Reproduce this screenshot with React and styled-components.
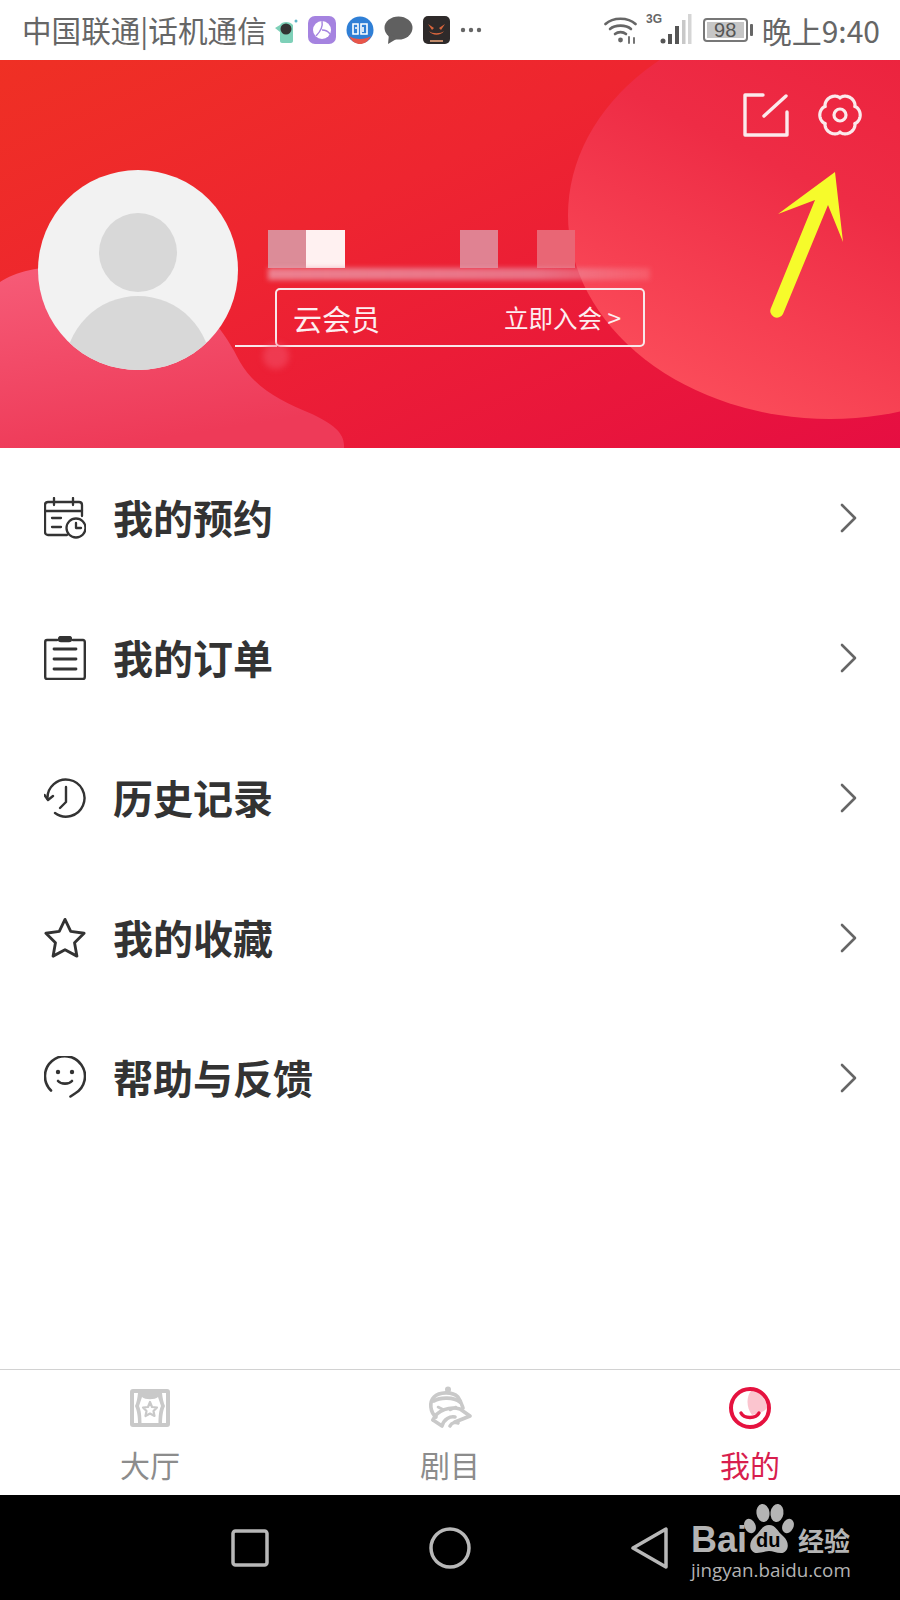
import React from 'react'
import styled, { createGlobalStyle } from 'styled-components'

const CJK = `'Noto Sans CJK SC', 'Noto Sans', sans-serif`

const GlobalStyle = createGlobalStyle`
  html, body {
    margin: 0;
    padding: 0;
    background: #ffffff;
  }
  * {
    box-sizing: border-box;
  }
`

const Page = styled.div`
  width: 900px;
  height: 1600px;
  display: flex;
  flex-direction: column;
  font-family: ${CJK};
  overflow: hidden;
  background: #ffffff;
`

/* status bar */
const StatusBar = styled.div`
  height: 60px;
  flex: none;
  display: flex;
  align-items: center;
  padding: 0 20px 0 22px;
  color: #666666;
  background: #ffffff;
`
const Carrier = styled.div`
  font-size: 29.6px;
  line-height: 60px;
  white-space: nowrap;
`
const NoticeIcons = styled.div`
  display: flex;
  align-items: center;
  gap: 10px;
  margin-left: 7px;
`
const StatusRight = styled.div`
  margin-left: auto;
  display: flex;
  align-items: center;
  gap: 8px;
`
const Clock = styled.div`
  font-size: 30px;
  line-height: 60px;
  margin-left: 6px;
  white-space: nowrap;
`
const Battery = styled.div`
  width: 45px;
  height: 24px;
  border: 2px solid #777777;
  border-radius: 4px;
  margin-left: 3px;
  padding: 2px;
  position: relative;
  &::after {
    content: '';
    position: absolute;
    right: -7px;
    top: 4px;
    width: 3px;
    height: 12px;
    background: #666666;
    border-radius: 1px;
  }
`
const BatteryFill = styled.div`
  height: 100%;
  background: #c6c6c6;
  font-family: 'Liberation Sans', sans-serif;
  font-size: 20px;
  line-height: 16px;
  text-align: center;
  color: #555555;
`

/* red header */
const Header = styled.div`
  height: 388px;
  flex: none;
  position: relative;
  overflow: hidden;
  background: linear-gradient(155deg, #ef3024 0%, #ee2530 38%, #e60e42 100%);
  padding: 33px 38px 0 38px;
`
const Decor = styled.svg`
  position: absolute;
  left: 0;
  top: 0;
`
const HeaderActions = styled.div`
  position: relative;
  display: flex;
  justify-content: flex-end;
  gap: 29px;
  height: 44px;
`
const Profile = styled.div`
  position: relative;
  display: flex;
  margin-top: 33px;
`
const Avatar = styled.div`
  width: 200px;
  height: 200px;
  flex: none;
  border-radius: 50%;
  background: #f2f2f2;
  overflow: hidden;
  display: flex;
  flex-direction: column;
  align-items: center;
  padding-top: 43px;
`
const AvatarHead = styled.div`
  width: 78px;
  height: 79px;
  flex: none;
  border-radius: 50%;
  background: #d8d8d8;
`
const AvatarBody = styled.div`
  width: 146px;
  height: 146px;
  flex: none;
  margin-top: 4px;
  border-radius: 50%;
  background: #d8d8d8;
`
const Info = styled.div`
  margin-left: 30px;
  padding-top: 60px;
  display: flex;
  flex-direction: column;
`
const Redacted = styled.div`
  display: flex;
  height: 38px;
`
const RedactedCell = styled.div`
  width: 38.4px;
  height: 38px;
  background: ${props => props.tone || 'transparent'};
`
const BlurStrip = styled.div`
  width: 382px;
  height: 12px;
  margin-bottom: -1px;
  background: linear-gradient(90deg, rgba(236, 160, 175, 0.75), rgba(232, 150, 168, 0.7) 70%, rgba(255, 190, 195, 0.2));
  filter: blur(2.5px);
`
const MemberBox = styled.div`
  position: relative;
  width: 370px;
  height: 59px;
  margin: 9px 0 0 7px;
  border: 2px solid #f8e8ea;
  border-radius: 5px;
  display: flex;
  align-items: center;
  justify-content: space-between;
  padding: 0 22px 0 16px;
  color: #fdeef0;
  &::before {
    content: '';
    position: absolute;
    left: -42px;
    bottom: -2px;
    width: 42px;
    height: 2px;
    background: #f8e8ea;
  }
  &::after {
    content: '';
    position: absolute;
    left: -14px;
    bottom: -24px;
    width: 26px;
    height: 26px;
    border-radius: 50%;
    background: rgba(244, 90, 115, 0.45);
    filter: blur(3px);
  }
`
const MemberTitle = styled.div`
  font-size: 29px;
  line-height: 34px;
`
const MemberJoin = styled.div`
  font-size: 24.5px;
  line-height: 34px;
`

/* menu */
const Menu = styled.div`
  flex: 1;
  display: flex;
  flex-direction: column;
`
const Row = styled.div`
  height: 140px;
  flex: none;
  display: flex;
  align-items: center;
  padding: 0 42px 0 44px;
`
const RowIcon = styled.div`
  width: 42px;
  height: 44px;
  flex: none;
  display: flex;
  align-items: center;
  justify-content: center;
`
const RowLabel = styled.div`
  margin: -3px 0 0 27px;
  font-size: 40px;
  font-weight: 700;
  line-height: 50px;
  color: #333333;
`
const Chevron = styled.svg`
  margin-left: auto;
`

/* bottom tabs */
const Tabs = styled.div`
  height: 126px;
  flex: none;
  display: grid;
  grid-template-columns: 300px 300px 300px;
  border-top: 1px solid #d2d2d2;
`
const Tab = styled.div`
  display: flex;
  flex-direction: column;
  align-items: center;
  padding-top: 16px;
`
const TabIcon = styled.div`
  height: 44px;
  display: flex;
  align-items: center;
  justify-content: center;
`
const TabLabel = styled.div`
  margin-top: 14px;
  font-size: 30px;
  line-height: 40px;
  color: ${props => (props.active ? '#d81e4e' : '#8c8c8c')};
`

/* android nav */
const NavBar = styled.div`
  height: 105px;
  flex: none;
  background: #000000;
  position: relative;
  display: grid;
  grid-template-columns: repeat(3, 200px);
  justify-content: center;
  align-items: center;
  justify-items: center;
`
const NavSlot = styled.div`
  height: 42px;
  display: flex;
  align-items: center;
`
const Watermark = styled.div`
  position: absolute;
  left: 690px;
  top: 8px;
  width: 165px;
  height: 86px;
  color: #b4b4b4;
`
const Paw = styled.svg`
  position: absolute;
  left: 54px;
  top: 0;
`
const BaiText = styled.div`
  position: absolute;
  left: 1px;
  top: 16px;
  font-family: 'Liberation Sans', sans-serif;
  font-size: 36px;
  line-height: 42px;
  font-weight: 700;
`
const DuText = styled.div`
  position: absolute;
  left: 66px;
  top: 27px;
  font-family: 'Liberation Sans', sans-serif;
  font-size: 20px;
  line-height: 20px;
  font-weight: 700;
  color: #000000;
`
const JingText = styled.div`
  position: absolute;
  left: 108px;
  top: 20px;
  font-size: 26px;
  line-height: 34px;
  font-weight: 700;
  white-space: nowrap;
`
const SiteText = styled.div`
  position: absolute;
  left: 1px;
  top: 54px;
  font-family: 'Open Sans', sans-serif;
  font-size: 18.8px;
  line-height: 26px;
  white-space: nowrap;
`

const gearPath = () => {
  const points = []
  for (let i = 0; i < 120; i++) {
    const t = (i / 120) * Math.PI * 2
    const r = 17 + 3.2 * Math.pow(Math.abs(Math.cos(3 * t)), 0.7)
    points.push(`${(22 + r * Math.cos(t)).toFixed(2)} ${(22 + r * Math.sin(t)).toFixed(2)}`)
  }
  return `M${points.join('L')}Z`
}

const HeaderDecor = () => (
  <Decor width="900" height="388" viewBox="0 0 900 388">
    <defs>
      <linearGradient id="bubbleRight" x1="0.85" y1="0" x2="0.25" y2="0.95">
        <stop offset="0" stopColor="#eb1e3a" />
        <stop offset="0.5" stopColor="#ee2c45" />
        <stop offset="1" stopColor="#fb4c5a" />
      </linearGradient>
      <linearGradient id="bubbleLeft" x1="0" y1="0" x2="0.3" y2="1">
        <stop offset="0" stopColor="#f65c78" />
        <stop offset="1" stopColor="#ee3a58" />
      </linearGradient>
    </defs>
    <ellipse cx="830" cy="155" rx="262" ry="204" fill="url(#bubbleRight)" />
    <path
      d="M0 222C30 202 100 198 165 226C205 244 225 272 240 302C255 328 282 342 312 354C332 364 345 372 344 388L0 388Z"
      fill="url(#bubbleLeft)"
    />
  </Decor>
)

const ArrowNote = () => (
  <Decor width="900" height="388" viewBox="0 0 900 388">
    <path
      d="M835 112L843 182L828 145L783 254A6.5 6.5 0 0 1 771 248L815 140L778 154Z"
      fill="#f6fb2b"
    />
  </Decor>
)

const EditIcon = () => (
  <svg width="46" height="44" viewBox="0 0 46 44" fill="none" stroke="#fbeaec" strokeWidth="3.4" strokeLinecap="round" strokeLinejoin="round">
    <path d="M20 2H2V42H44V19" />
    <path d="M21 23L43 3" />
  </svg>
)

const GearIcon = () => (
  <svg width="44" height="44" viewBox="0 0 44 44" fill="none" stroke="#fbeaec" strokeWidth="3.2" strokeLinejoin="round">
    <path d={gearPath()} />
    <circle cx="22" cy="22" r="6" />
  </svg>
)

const CameraApp = () => (
  <svg width="24" height="26" viewBox="0 0 24 26">
    <path d="M6 8C8 4 16 4 19 8V24C19 25 18 26 17 26H8C7 26 6 25 6 24V15L1 11Z" fill="#7ed0b8" />
    <circle cx="12" cy="12" r="5.5" fill="#333333" />
    <circle cx="22" cy="4" r="1.5" fill="#5fb6c6" />
  </svg>
)

const PurpleApp = () => (
  <svg width="28" height="28" viewBox="0 0 28 28">
    <rect width="28" height="28" rx="7" fill="#a583e0" />
    <circle cx="14" cy="14" r="9" fill="#ffffff" />
    <path d="M14 5C15 10 14 14 8 20M14 14C17 14 20 15 22 18" stroke="#a583e0" strokeWidth="1.4" fill="none" />
  </svg>
)

const BlueApp = () => (
  <svg width="28" height="28" viewBox="0 0 28 28">
    <circle cx="14" cy="14" r="13.5" fill="#2f7fd6" />
    <path d="M3 20C8 24 20 24 25 20C22 26 18 28 14 28C10 28 6 26 3 20Z" fill="#e8564a" />
    <path d="M7 8H12V18H7ZM15 8H21V18H15ZM9 12H11M17 11V16" stroke="#ffffff" strokeWidth="1.6" fill="none" />
  </svg>
)

const ChatApp = () => (
  <svg width="29" height="28" viewBox="0 0 29 28">
    <ellipse cx="14.5" cy="12" rx="14" ry="11.5" fill="#606060" />
    <path d="M5 18L4 28L14 22Z" fill="#606060" />
  </svg>
)

const DarkApp = () => (
  <svg width="27" height="28" viewBox="0 0 27 28">
    <rect width="27" height="28" rx="5" fill="#2e2a2a" />
    <path d="M5 8L11 12L9 14ZM22 8L16 12L18 14Z" fill="#d9653c" />
    <path d="M6 15C9 20 18 20 21 15C18 18 9 18 6 15Z" fill="#d9653c" />
    <rect x="7" y="24" width="13" height="2" fill="#c08a6a" />
  </svg>
)

const MoreDots = () => (
  <svg width="22" height="6" viewBox="0 0 22 6" fill="#666666">
    <circle cx="3" cy="3" r="2.2" />
    <circle cx="11" cy="3" r="2.2" />
    <circle cx="19" cy="3" r="2.2" />
  </svg>
)

const WifiIcon = () => (
  <svg width="34" height="30" viewBox="0 0 34 30" fill="none" stroke="#666666" strokeWidth="2.6" strokeLinecap="round">
    <path d="M1.5 9C9 2 24 2 31.5 9" />
    <path d="M6 14C11 9.5 22 9.5 27 14" />
    <path d="M11 19C14 16.5 19 16.5 22 19" />
    <circle cx="16.5" cy="25" r="2.4" fill="#666666" stroke="none" />
    <path d="M25 22V28M30 23V28" strokeWidth="1.8" />
  </svg>
)

const SignalIcon = () => (
  <svg width="46" height="34" viewBox="0 0 46 34">
    <text x="0" y="10" fontSize="12" fontWeight="700" fontFamily="'Liberation Sans', sans-serif" fill="#666666">3G</text>
    <circle cx="17" cy="28" r="2.5" fill="#555555" />
    <rect x="22" y="21" width="4" height="10" fill="#555555" />
    <rect x="29" y="13" width="4" height="18" fill="#555555" />
    <rect x="36" y="7" width="3.5" height="24" fill="#c8c8c8" />
    <rect x="42" y="1" width="3.5" height="30" fill="#d5d5d5" />
  </svg>
)

const CalendarIcon = () => (
  <svg width="42" height="42" viewBox="0 0 42 42" fill="none" stroke="#333333" strokeWidth="2.3" strokeLinecap="round" strokeLinejoin="round">
    <path d="M23 38H4C2.5 38 1 36.8 1 35V8C1 6 2.5 5 4 5H35C36.5 5 38 6 38 8V19" />
    <path d="M1 14H38M10 1V8M29 1V8M8 21H17M8 30H17" />
    <circle cx="32" cy="31" r="9.5" />
    <path d="M32 26V31H37" />
  </svg>
)

const ClipboardIcon = () => (
  <svg width="42" height="44" viewBox="0 0 42 44" fill="none" stroke="#333333" strokeWidth="2.4" strokeLinecap="round" strokeLinejoin="round">
    <path d="M13 4H3C2 4 1.2 5 1.2 6V41C1.2 42 2 43 3 43H39C40 43 40.8 42 40.8 41V6C40.8 5 40 4 39 4H29" />
    <rect x="15" y="1" width="12" height="4" rx="2" fill="#333333" />
    <path d="M10 13H32M10 23H32M10 33H32" strokeWidth="2.8" />
  </svg>
)

const HistoryIcon = () => (
  <svg width="42" height="42" viewBox="0 0 42 42" fill="none" stroke="#333333" strokeWidth="2.4" strokeLinecap="round" strokeLinejoin="round">
    <path d="M3.5 22A18.5 18.5 0 1 1 11 36" />
    <path d="M0.5 18L4 23L9 19" />
    <path d="M22 10V25L16 31" />
  </svg>
)

const StarIcon = () => (
  <svg width="44" height="44" viewBox="0 0 44 44" fill="none" stroke="#333333" strokeWidth="3" strokeLinejoin="round">
    <path d="M22 2.5L28 15L42 17L32 27L34.5 41L22 34.3L9.5 41L12 27L2 17L16 15Z" />
  </svg>
)

const SmileIcon = () => (
  <svg width="42" height="44" viewBox="0 0 42 44" fill="none" stroke="#333333" strokeWidth="2.6" strokeLinecap="round">
    <path d="M7 34.5A20 20 0 1 1 31 37.5L26.5 40.5" />
    <circle cx="14" cy="16" r="2.2" fill="#333333" stroke="none" />
    <circle cx="28" cy="16" r="2.2" fill="#333333" stroke="none" />
    <path d="M14 25C17 28.5 25 28.5 28 25" />
  </svg>
)

const ChevronRight = () => (
  <Chevron width="18" height="30" viewBox="0 0 18 30" fill="none" stroke="#666666" strokeWidth="2.6" strokeLinecap="round" strokeLinejoin="round">
    <path d="M2 2L15 15L2 28" />
  </Chevron>
)

const HallIcon = () => (
  <svg width="40" height="38" viewBox="0 0 40 38">
    <rect width="40" height="38" rx="3" fill="#c9c9c9" />
    <path d="M4 4H8C7.5 9 6.5 14 5 17C7 21 8 28 8 34H4Z" fill="#ffffff" />
    <path d="M36 4H32C32.5 9 33.5 14 35 17C33 21 32 28 32 34H36Z" fill="#ffffff" />
    <path d="M12 8C15 11 25 11 28 8L31 17C29 21 28.5 28 28.5 34H11.5C11.5 28 11 21 9 17Z" fill="#ffffff" />
    <path d="M20 13L22 18L27 18.5L23.5 22L24.5 27L20 24.5L15.5 27L16.5 22L13 18.5L18 18Z" fill="none" stroke="#c9c9c9" strokeWidth="2.2" strokeLinejoin="round" />
  </svg>
)

const MaskIcon = () => (
  <svg width="44" height="44" viewBox="0 0 44 44" fill="none" stroke="#c9c9c9" strokeWidth="3.6" strokeLinecap="round" strokeLinejoin="round">
    <circle cx="20" cy="3.5" r="3" fill="#c9c9c9" stroke="none" />
    <path d="M8 31C2 26 1 16 6 11C11 6 24 5 30 11C33 15 34 19 35 22" />
    <path d="M6 15C12 11 26 11 32 16" />
    <path d="M10 21L16 24M28 21L22 24" strokeWidth="2.6" />
    <path d="M5 34C9 24 22 20 32 23L42 30L27 36" />
    <path d="M5 34L14 40C16 33 22 30 27 31" />
    <path d="M22 40C24 36 28 36 30 37" />
  </svg>
)

const MineIcon = () => (
  <svg width="44" height="44" viewBox="0 0 44 44" fill="none">
    <path d="M24 4C18 9 18 22 24 29C30 28 36 26 39 22C39 14 32 6 24 4Z" fill="#fbc5cf" />
    <circle cx="22" cy="22" r="19" stroke="#e5123f" strokeWidth="4" />
    <path d="M13 27C16 33 28 33 31 27" stroke="#e5123f" strokeWidth="3.4" strokeLinecap="round" />
  </svg>
)

const PawShape = () => (
  <Paw width="52" height="54" viewBox="0 0 52 54" fill="#b4b4b4">
    <ellipse cx="19" cy="10" rx="6.5" ry="9" transform="rotate(-8 19 10)" />
    <ellipse cx="33" cy="10" rx="6.5" ry="9" transform="rotate(8 33 10)" />
    <ellipse cx="6" cy="23" rx="5.5" ry="7.5" transform="rotate(-25 6 23)" />
    <ellipse cx="44" cy="23" rx="5.5" ry="7.5" transform="rotate(25 44 23)" />
    <path d="M25 22C32 22 33 28 39 33C47 40 44 50 37 50C32 50 29 48 25 48C21 48 18 50 13 50C6 50 3 40 11 33C17 28 18 22 25 22Z" />
  </Paw>
)

const menuItems = [
  { label: '我的预约', icon: <CalendarIcon /> },
  { label: '我的订单', icon: <ClipboardIcon /> },
  { label: '历史记录', icon: <HistoryIcon /> },
  { label: '我的收藏', icon: <StarIcon /> },
  { label: '帮助与反馈', icon: <SmileIcon /> },
]

const redactedTones = ['#dc8c98', '#fff1f1', null, null, null, '#e08292', null, '#e96675']

export default function App() {
  return (
    <Page>
      <GlobalStyle />
      <StatusBar>
        <Carrier>中国联通|话机通信</Carrier>
        <NoticeIcons>
          <CameraApp />
          <PurpleApp />
          <BlueApp />
          <ChatApp />
          <DarkApp />
          <MoreDots />
        </NoticeIcons>
        <StatusRight>
          <WifiIcon />
          <SignalIcon />
          <Battery>
            <BatteryFill>98</BatteryFill>
          </Battery>
          <Clock>晚上9:40</Clock>
        </StatusRight>
      </StatusBar>

      <Header>
        <HeaderDecor />
        <HeaderActions>
          <EditIcon />
          <GearIcon />
        </HeaderActions>
        <Profile>
          <Avatar>
            <AvatarHead />
            <AvatarBody />
          </Avatar>
          <Info>
            <Redacted>
              {redactedTones.map((tone, i) => <RedactedCell key={i} tone={tone} />)}
            </Redacted>
            <BlurStrip />
            <MemberBox>
              <MemberTitle>云会员</MemberTitle>
              <MemberJoin>立即入会 &gt;</MemberJoin>
            </MemberBox>
          </Info>
        </Profile>
        <ArrowNote />
      </Header>

      <Menu>
        {menuItems.map(item => (
          <Row key={item.label}>
            <RowIcon>{item.icon}</RowIcon>
            <RowLabel>{item.label}</RowLabel>
            <ChevronRight />
          </Row>
        ))}
      </Menu>

      <Tabs>
        <Tab>
          <TabIcon><HallIcon /></TabIcon>
          <TabLabel>大厅</TabLabel>
        </Tab>
        <Tab>
          <TabIcon><MaskIcon /></TabIcon>
          <TabLabel>剧目</TabLabel>
        </Tab>
        <Tab>
          <TabIcon><MineIcon /></TabIcon>
          <TabLabel active>我的</TabLabel>
        </Tab>
      </Tabs>

      <NavBar>
        <NavSlot>
          <svg width="38" height="38" viewBox="0 0 38 38" fill="none" stroke="#b8b8b8" strokeWidth="3.5" strokeLinejoin="round">
            <rect x="2" y="2" width="34" height="34" rx="2.5" />
          </svg>
        </NavSlot>
        <NavSlot>
          <svg width="42" height="42" viewBox="0 0 42 42" fill="none" stroke="#b8b8b8" strokeWidth="3.5">
            <circle cx="21" cy="21" r="19" />
          </svg>
        </NavSlot>
        <NavSlot>
          <svg width="38" height="42" viewBox="0 0 38 42" fill="none" stroke="#b8b8b8" strokeWidth="3.5" strokeLinejoin="round">
            <path d="M35 2V40L2 21Z" />
          </svg>
        </NavSlot>
        <Watermark>
          <PawShape />
          <BaiText>Bai</BaiText>
          <DuText>du</DuText>
          <JingText>经验</JingText>
          <SiteText>jingyan.baidu.com</SiteText>
        </Watermark>
      </NavBar>
    </Page>
  )
}
